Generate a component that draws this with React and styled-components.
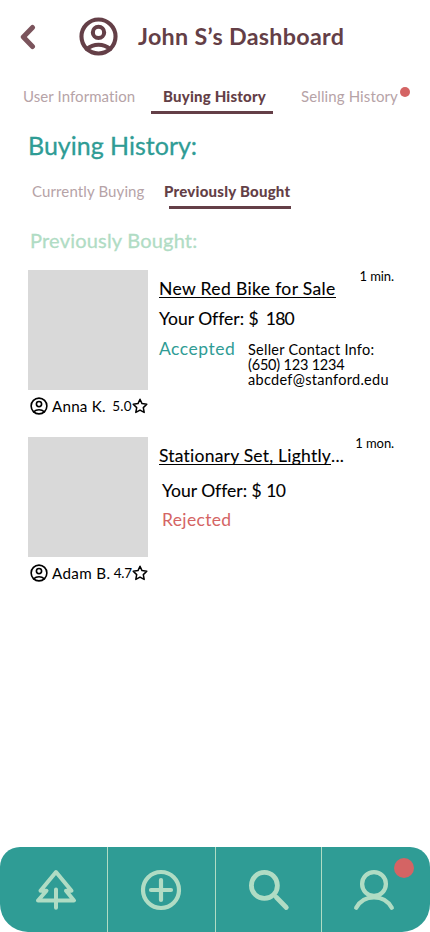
import React from "react";
import styled, { createGlobalStyle, css } from "styled-components";

const c = {
  plum: "#643f47",
  faded: "#b6a3a7",
  teal: "#2f9c95",
  mint: "#b0dcc4",
  red: "#d46464",
  grey: "#d9d9d9",
};

const Global = createGlobalStyle`
  * { box-sizing: border-box; }
  body { margin: 0; background: #fff; color: #000; font-family: Lato, "Open Sans", sans-serif; font-variant-ligatures: none; }
  button { font: inherit; color: inherit; background: none; border: 0; padding: 0; margin: 0; }
  h1, h2, h3, p { margin: 0; font-weight: 400; }
`;

const Screen = styled.div`
  width: 430px;
  height: 932px;
  display: flex;
  flex-direction: column;
  overflow: hidden;
  background: #fff;
`;

const type = css`
  white-space: pre;
  font-size: ${(p) => p.$size}px;
  letter-spacing: ${(p) => p.$track || 0}px;
  -webkit-text-stroke: ${(p) => p.$heft || 0}px currentColor;
`;

const Header = styled.header`
  display: flex;
  align-items: center;
  height: 86px;
  padding: 0 0 13px 20px;
`;
const BackButton = styled.button`
  display: flex;
  width: 17px;
  margin-right: 42px;
`;
const Title = styled.h1`
  ${type}
  margin: -1px 0 0 20px;
  font-weight: 700;
  line-height: 30px;
  color: ${c.plum};
`;

const Tabs = styled.nav`
  display: flex;
  flex: none;
  height: ${(p) => p.$height}px;
  padding-left: ${(p) => p.$inset}px;
`;
const Tab = styled.button`
  ${type}
  display: flex;
  flex-direction: column;
  align-items: flex-start;
  width: ${(p) => p.$width}px;
  line-height: 20px;
  text-align: left;
  color: ${(p) => (p.$active ? c.plum : c.faded)};
  font-weight: ${(p) => (p.$active ? 900 : 400)};
`;
const TabLabel = styled.span`
  display: flex;
  padding-left: ${(p) => p.$indent || 0}px;
`;
const Underline = styled.span`
  width: 122px;
  height: 3px;
  margin: ${(p) => p.$gap}px 0 0 ${(p) => p.$indent || 0}px;
  background: ${c.plum};
`;
const TabDot = styled.span`
  width: 10px;
  height: 10px;
  margin: 1px 0 0 2px;
  border-radius: 50%;
  background: ${c.red};
`;

const Heading = styled.h2`
  ${type}
  height: 67px;
  padding: 16px 0 0 28px;
  line-height: 30px;
  color: ${c.teal};
`;
const SubHeading = styled.h3`
  ${type}
  height: 49px;
  padding: 6px 0 0 30px;
  line-height: 26px;
  color: ${c.mint};
`;

const List = styled.main`
  flex: 1;
  padding: 0 36px 0 28px;
`;
const Item = styled.article`
  display: grid;
  grid-template-columns: 120px 1fr;
  column-gap: 11px;
  height: 167px;
`;
const Photo = styled.div`
  height: 120px;
  background: ${c.grey};
`;
const Seller = styled.div`
  display: flex;
  align-items: center;
  height: 31px;
  padding-left: 2px;
`;
const Name = styled.span`
  ${type}
  width: ${(p) => p.$width}px;
  margin-left: 4px;
  line-height: 20px;
`;
const Score = styled.span`
  ${type}
  width: ${(p) => p.$width}px;
  line-height: 20px;
`;
const Details = styled.div`
  display: flex;
  flex-direction: column;
`;
const TopLine = styled.div`
  display: flex;
  justify-content: space-between;
  height: 36px;
`;
const ItemTitle = styled.h3`
  ${type}
  padding-top: 6px;
  line-height: 25px;
`;
const Linked = styled.span`
  display: inline-block;
  height: 22px;
  border-bottom: 1px solid #000;
`;
const Age = styled.time`
  ${type}
  margin-top: -1px;
  line-height: 14px;
`;
const Offer = styled.p`
  ${type}
  padding-left: ${(p) => p.$indent || 0}px;
  margin-top: ${(p) => p.$gap}px;
  line-height: 24px;
`;
const Amount = styled.span`
  margin-left: ${(p) => p.$gap}px;
  letter-spacing: -0.7px;
`;
const Outcome = styled.div`
  display: flex;
  padding-left: ${(p) => p.$indent || 0}px;
  margin-top: ${(p) => p.$gap}px;
`;
const Status = styled.span`
  ${type}
  width: 89px;
  line-height: 24px;
  color: ${(p) => (p.$rejected ? c.red : c.teal)};
`;
const Contact = styled.address`
  font-style: normal;
  padding-top: 5px;
`;
const ContactLine = styled.div`
  ${type}
  line-height: 15px;
`;

const BottomNav = styled.nav`
  display: grid;
  grid-template-columns: 108px 108px 106px 108px;
  height: 85px;
  flex: none;
  overflow: hidden;
  border-radius: 20px 20px 28px 28px;
  background: ${c.teal};
`;
const NavItem = styled.button`
  position: relative;
  display: flex;
  padding: 22px 0 0 ${(p) => p.$inset}px;
  border-right: ${(p) => (p.$last ? 0 : 1)}px solid ${c.mint};
`;
const NavDot = styled.span`
  position: absolute;
  top: 11px;
  right: 16px;
  width: 20px;
  height: 20px;
  border-radius: 50%;
  background: ${c.red};
`;

const Icon = styled.svg`
  display: block;
  flex: none;
  fill: none;
  stroke: ${(p) => p.$color || "#000"};
  stroke-linecap: round;
  stroke-linejoin: round;
`;

const UserCircle = ({ size, color, stroke }) => (
  <Icon width={size} height={size} viewBox="0 0 38 38" $color={color} strokeWidth={stroke}>
    <circle cx="19" cy="19" r="16.6" />
    <circle cx="19" cy="15" r="5.5" />
    <path d="M7.5 31.2Q12.5 27 19 27T30.5 31.2" />
  </Icon>
);
const Star = () => (
  <Icon width="16" height="16" viewBox="0 0 16 16" strokeWidth="1.5">
    <path d="M8 1.3L10 5.6L14.8 6.2L11.3 9.6L12.2 14.4L8 12.1L3.8 14.4L4.7 9.6L1.2 6.2L6 5.6Z" />
  </Icon>
);

function Listing({ title, ellipsis, track, age, seller, nameTrack, nameWidth, score, scoreTrack, children }) {
  return (
    <Item>
      <div>
        <Photo />
        <Seller>
          <UserCircle size={18} stroke={3.4} />
          <Name $size={15.2} $track={nameTrack} $width={nameWidth}>{seller}</Name>
          <Score $size={13.5} $track={scoreTrack} $width={81 - nameWidth}>{score}</Score>
          <Star />
        </Seller>
      </div>
      <Details>
        <TopLine>
          <ItemTitle $size={17.5} $heft={0.1} $track={track}>
            <Linked>{title}</Linked>{ellipsis}
          </ItemTitle>
          <Age $size={13} $track={-0.1}>{age}</Age>
        </TopLine>
        {children}
      </Details>
    </Item>
  );
}

export default function App() {
  return (
    <Screen>
      <Global />
      <Header>
        <BackButton aria-label="Back">
          <Icon width="17" height="26" viewBox="0 0 17 26" $color="#7b545c" strokeWidth="5">
            <path d="M12.5 3.5L3.3 13L12.5 22.5" />
          </Icon>
        </BackButton>
        <UserCircle size={39} color={c.plum} stroke={4} />
        <Title $size={23.3} $track={0.3}>John S’s Dashboard</Title>
      </Header>
      <Tabs $height={28} $inset={23}>
        <Tab $size={15} $width={128} $track={0.08}><TabLabel>User Information</TabLabel></Tab>
        <Tab $size={15} $width={150} $track={0.2} $active>
          <TabLabel $indent={12}>Buying History</TabLabel>
          <Underline $gap={5} />
        </Tab>
        <Tab $size={15} $width={114} $track={0.12}>
          <TabLabel>Selling History<TabDot /></TabLabel>
        </Tab>
      </Tabs>
      <Heading $size={25} $heft={0.3}>Buying History:</Heading>
      <Tabs $height={40} $inset={32}>
        <Tab $size={15} $width={132} $track={0.12}><TabLabel>Currently Buying</TabLabel></Tab>
        <Tab $size={15} $width={130} $track={0.24} $active>
          <TabLabel>Previously Bought</TabLabel>
          <Underline $gap={5} $indent={5} />
        </Tab>
      </Tabs>
      <SubHeading $size={20} $heft={0.3} $track={0.2}>Previously Bought:</SubHeading>
      <List>
        <Listing
          title="New Red Bike for Sale" track={0.36} age="1 min."
          seller="Anna K." nameTrack={0.2} nameWidth={61} score="5.0" scoreTrack={0.2}
        >
          <Offer $size={17.5} $heft={0.1} $gap={1}>Your Offer: $ <Amount $gap={2.5}>180</Amount></Offer>
          <Outcome $gap={6}>
            <Status $size={17.5} $track={0.5}>Accepted</Status>
            <Contact>
              <ContactLine $size={14.5} $track={0.25}>Seller Contact Info:</ContactLine>
              <ContactLine $size={14.5} $track={-0.2}>(650) 123 1234</ContactLine>
              <ContactLine $size={14.5} $track={0.3}>abcdef@stanford.edu</ContactLine>
            </Contact>
          </Outcome>
        </Listing>
        <Listing
          title="Stationary Set, Lightly" ellipsis="..." track={0.22} age="1 mon."
          seller="Adam B." nameTrack={0.35} nameWidth={62.5} score="4.7" scoreTrack={-0.2}
        >
          <Offer $size={17.5} $heft={0.1} $gap={6} $indent={3}>Your Offer: $ <Amount $gap={0}>10</Amount></Offer>
          <Outcome $gap={5} $indent={3}>
            <Status $rejected $size={17.5} $track={0.35}>Rejected</Status>
          </Outcome>
        </Listing>
      </List>
      <BottomNav>
        <NavItem $inset={35} aria-label="Home">
          <Icon width="42" height="42" viewBox="0 0 42 42" $color={c.mint} strokeWidth="4">
            <path d="M21 3L36.5 21.8H31L39 31.5H3L11.5 21.8H5.5ZM21 20.5V38.7" />
          </Icon>
        </NavItem>
        <NavItem $inset={32} aria-label="Add">
          <Icon width="42" height="42" viewBox="0 0 42 42" $color={c.mint} strokeWidth="4.2">
            <circle cx="21" cy="21" r="18" />
            <path d="M21 11V31M11 21H31" />
          </Icon>
        </NavItem>
        <NavItem $inset={32} aria-label="Search">
          <Icon width="42" height="42" viewBox="0 0 42 42" $color={c.mint} strokeWidth="4.8">
            <circle cx="16.4" cy="16.4" r="13" />
            <path d="M28.3 28.3L38.3 38.5" />
          </Icon>
        </NavItem>
        <NavItem $inset={31} $last aria-label="Profile">
          <Icon width="42" height="42" viewBox="0 0 42 42" $color={c.mint} strokeWidth="4.3">
            <circle cx="21" cy="15" r="11.9" />
            <path d="M3.2 38.7A20.5 20.5 0 0 1 38.8 38.7" />
          </Icon>
          <NavDot />
        </NavItem>
      </BottomNav>
    </Screen>
  );
}
